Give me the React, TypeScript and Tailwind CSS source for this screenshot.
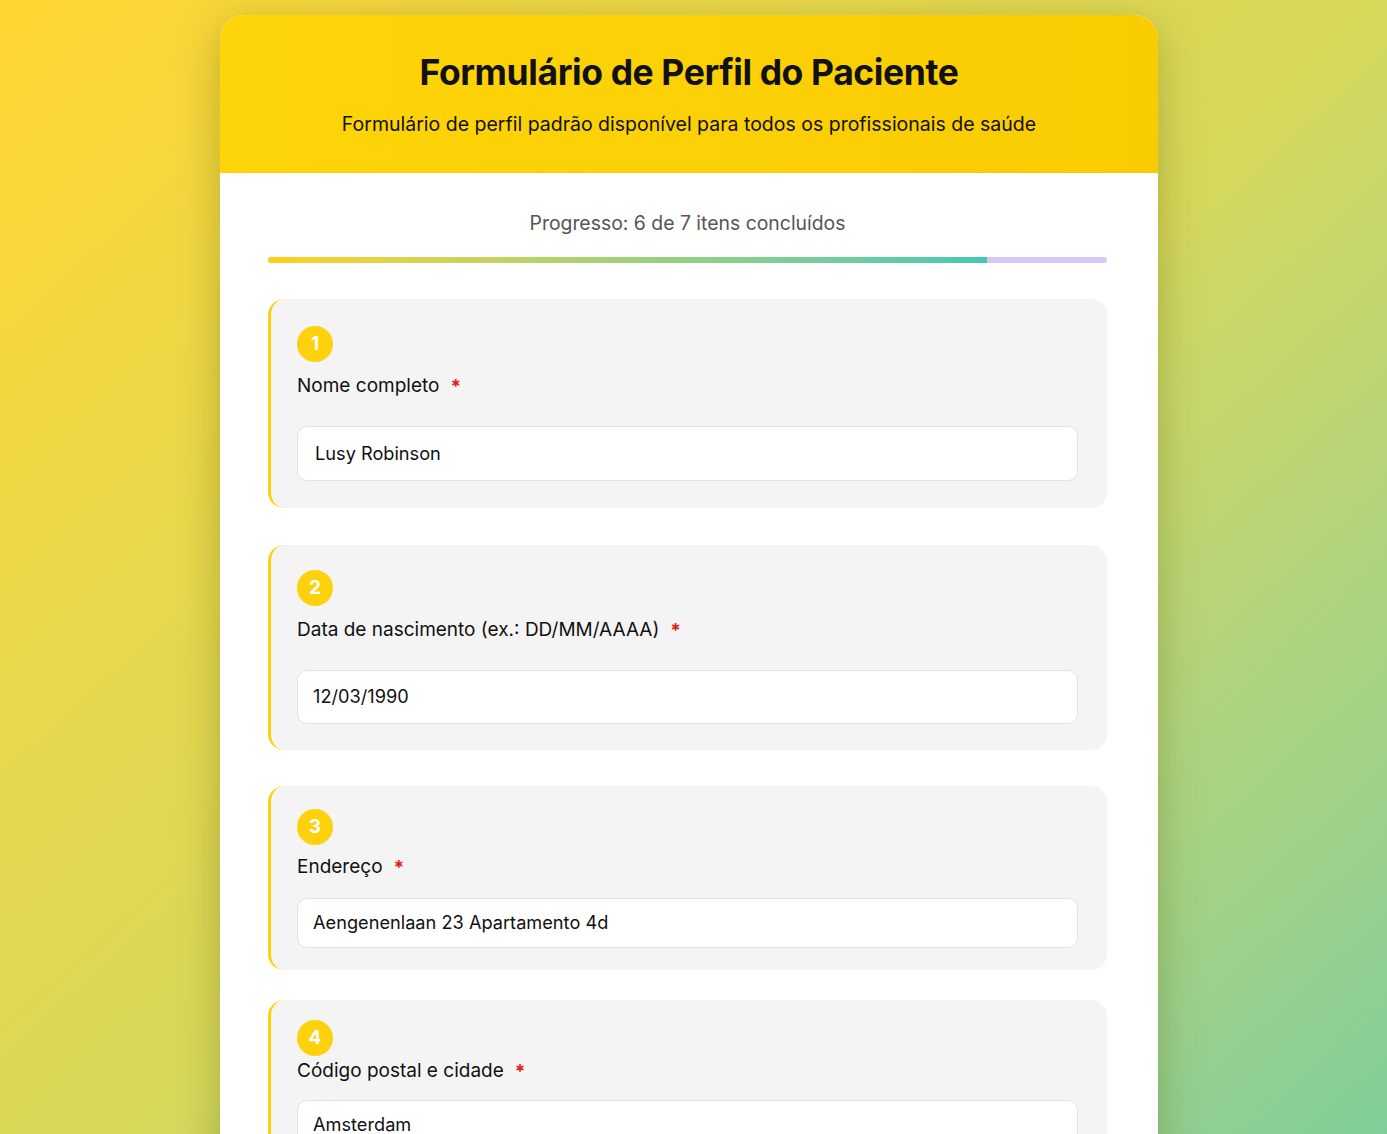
const fields = [
  {
    n: 1,
    label: "Nome completo",
    value: "Lusy Robinson",
    box: "pt-[27px] pb-[27px]",
    gapBadge: "mt-[11px]",
    gapInput: "mt-[27px]",
    input: "h-[55px] pl-[17px]",
  },
  {
    n: 2,
    label: "Data de nascimento (ex.: DD/MM/AAAA)",
    value: "12/03/1990",
    box: "pt-[25px] pb-[26px]",
    gapBadge: "mt-[11px]",
    gapInput: "mt-[27px]",
    input: "h-[54px] pl-[15px]",
  },
  {
    n: 3,
    label: "Endereço",
    value: "Aengenenlaan 23 Apartamento 4d",
    box: "pt-[23px] pb-[22px]",
    gapBadge: "mt-[9px]",
    gapInput: "mt-[18px]",
    input: "h-[50px] pl-[15px]",
  },
  {
    n: 4,
    label: "Código postal e cidade",
    value: "Amsterdam",
    box: "pt-[20px] pb-[22px]",
    gapBadge: "mt-[2px]",
    gapInput: "mt-[16px]",
    input: "h-[50px] pl-[15px]",
  },
];

const App = () => {
  return (
    <div
      className="min-h-screen bg-gradient-to-br from-[#ffd630] via-[#d6d85a] to-[#76cc9e] pt-[15px] pl-[220px] pb-10"
      style={{ fontFamily: "Inter, 'Noto Sans', sans-serif" }}
    >
      <div className="w-[938px] rounded-[24px] bg-white shadow-[0_10px_40px_rgba(90,90,0,0.35)] overflow-hidden">
        <div className="h-[158px] bg-gradient-to-r from-[#fed509] to-[#f9cc00] flex flex-col items-center pt-[34px]">
          <h1 className="text-[35.5px] leading-[48px] font-bold text-[#111] tracking-[-0.4px]">
            Formulário de Perfil do Paciente
          </h1>
          <p className="mt-[14px] text-[19.5px] leading-[26px] text-[#111]">
            Formulário de perfil padrão disponível para todos os profissionais de saúde
          </p>
        </div>

        <div className="pl-12 pr-[51px] pt-[37px] pb-10">
          <p className="text-center text-[19.4px] leading-[26px] text-[#555]">
            Progresso: 6 de 7 itens concluídos
          </p>
          <div className="mt-[21px] h-[6px] rounded-full bg-[#d5c8f3] overflow-hidden">
            <div
              className="h-full bg-gradient-to-r from-[#fdd20c] via-[#9fd079] to-[#43c9b3]"
              style={{ width: `${(6 / 7) * 100}%` }}
            />
          </div>

          <div className="mt-[36px] flex flex-col">
            {fields.map((f, i) => (
              <div
                key={f.n}
                className={`rounded-[16px] border-l-[3px] border-[#fdd20c] bg-[#f4f4f4] pl-[26px] pr-[29px] ${f.box} ${
                  i === 0 ? "" : i === 1 ? "mt-[37px]" : i === 2 ? "mt-[36px]" : "mt-[30px]"
                }`}
              >
                <div className="w-9 h-9 rounded-full bg-[#fdd20c] flex items-center justify-center text-white font-bold text-[19px]">
                  {f.n}
                </div>
                <div className={`${f.gapBadge} flex items-center text-[19px] leading-[26px] text-[#111]`}>
                  <span>{f.label}</span>
                  <span className="ml-[11px] text-[#e31b1b] text-[19px] font-bold leading-none">*</span>
                </div>
                <div
                  className={`${f.gapInput} ${f.input} bg-white rounded-[10px] border border-[#e1e1ea] flex items-center text-[18.2px] text-[#111]`}
                >
                  {f.value}
                </div>
              </div>
            ))}
          </div>
        </div>
      </div>
    </div>
  );
};

export default App;
